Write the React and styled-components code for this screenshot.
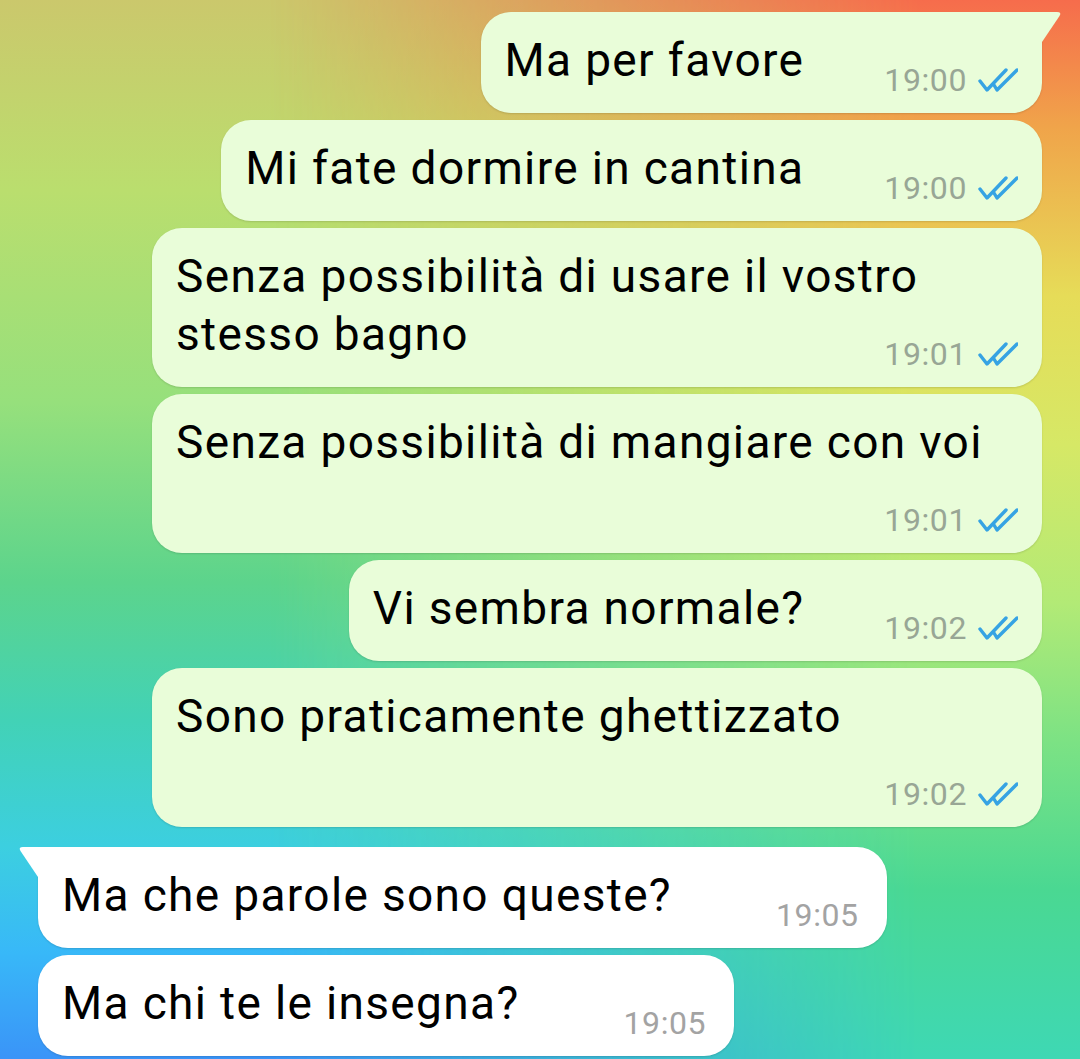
import React from 'react';
import styled, { createGlobalStyle, css } from 'styled-components';

const GlobalStyle = createGlobalStyle`
  html, body {
    margin: 0;
    padding: 0;
  }
  body {
    font-family: Roboto, "Noto Sans", "Liberation Sans", sans-serif;
  }
`;

const Chat = styled.div`
  position: relative;
  width: 1080px;
  height: 1059px;
  overflow: hidden;
  background: linear-gradient(180deg, #cbc86c 0%, #bade6e 18%, #96e07c 38%, #5cd48c 55%, #42d2b6 68%, #3ccfe0 80%, #38b8f8 90%, #3a94f8 100%);

  &::before {
    content: '';
    position: absolute;
    inset: 0;
    background: linear-gradient(180deg, #f66c4c 0%, #f0a44a 12%, #e6dc58 28%, #d6e866 42%, #b2ea76 57%, #7ce284 70%, #4ad892 84%, #3ed8b4 100%);
    mask-image: linear-gradient(90deg, transparent 25%, #000 85%);
  }
`;

const Thread = styled.div`
  position: relative;
  z-index: 1;
  display: flex;
  flex-direction: column;
  gap: 20px;
  padding: 12px 38px 0;
`;

const Group = styled.div`
  display: flex;
  flex-direction: column;
  gap: 7px;
  align-items: ${p => (p.$out ? 'flex-end' : 'flex-start')};
`;

const Bubble = styled.div`
  position: relative;
  display: flow-root;
  box-sizing: border-box;
  max-width: 890px;
  padding: 19px ${p => (p.$out ? 24 : 28)}px 17px 24px;
  background: ${p => (p.$out ? '#e9fdd9' : '#ffffff')};
  border-radius: 30px;
  box-shadow: 0 1px 2px rgba(0, 0, 0, 0.13);
  font-size: 46px;
  line-height: 58px;
  letter-spacing: 1.35px;
  color: #000;
  ${p => p.$tail && (p.$out
    ? css`border-top-right-radius: 0;`
    : css`border-top-left-radius: 0;`)}
`;

const Meta = styled.span`
  float: right;
  display: flex;
  align-items: center;
  gap: 11px;
  height: 32px;
  margin: 33px 0 0 ${p => (p.$out ? 80 : 104)}px;
  font-size: 32px;
  line-height: 32px;
  letter-spacing: 0.6px;
  color: ${p => (p.$out ? '#98a695' : '#a3a3a3')};
`;

const Tail = styled.svg`
  position: absolute;
  top: 0;
  ${p => (p.$out
    ? css`left: 100%;`
    : css`right: 100%; transform: scaleX(-1);`)}
  width: 20px;
  height: 30px;
  fill: ${p => (p.$out ? '#e9fdd9' : '#ffffff')};
`;

const Check = styled.svg`
  width: 40px;
  height: 24px;
  fill: none;
  stroke: #36a3e3;
  stroke-width: 3.4;
  stroke-linecap: round;
  stroke-linejoin: round;
`;

const DoubleCheck = () => (
  <Check viewBox="0 0 40 24">
    <path d="M2 13 L9 22 L28 2" />
    <path d="M16 17 L19 22 L39 2" />
  </Check>
);

const groups = [
  {
    out: true,
    messages: [
      { text: 'Ma per favore', time: '19:00' },
      { text: 'Mi fate dormire in cantina', time: '19:00' },
      { text: 'Senza possibilità di usare il vostro stesso bagno', time: '19:01' },
      { text: 'Senza possibilità di mangiare con voi', time: '19:01' },
      { text: 'Vi sembra normale?', time: '19:02' },
      { text: 'Sono praticamente ghettizzato', time: '19:02' },
    ],
  },
  {
    out: false,
    messages: [
      { text: 'Ma che parole sono queste?', time: '19:05' },
      { text: 'Ma chi te le insegna?', time: '19:05' },
    ],
  },
];

export default function App() {
  return (
    <>
      <GlobalStyle />
      <Chat>
        <Thread>
          {groups.map((g, gi) => (
            <Group key={gi} $out={g.out}>
              {g.messages.map((m, i) => (
                <Bubble key={i} $out={g.out} $tail={i === 0}>
                  {i === 0 && (
                    <Tail $out={g.out} viewBox="0 0 20 30">
                      <path d="M0 0 L15 0 Q20 0 17.5 4 L0 30 Z" />
                    </Tail>
                  )}
                  {m.text}
                  <Meta $out={g.out}>
                    <span>{m.time}</span>
                    {g.out && <DoubleCheck />}
                  </Meta>
                </Bubble>
              ))}
            </Group>
          ))}
        </Thread>
      </Chat>
    </>
  );
}
